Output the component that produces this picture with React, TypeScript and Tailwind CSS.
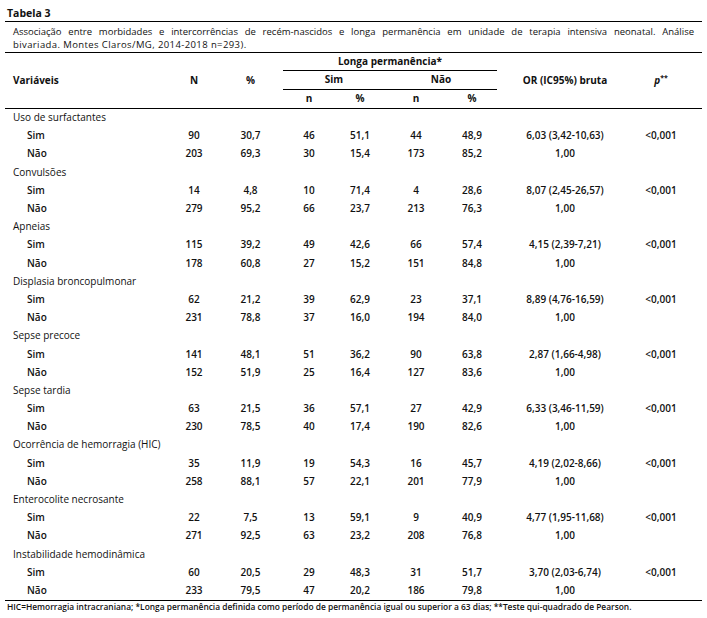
import React from "react";

type Row = [string, string, string, string, string, string, string, string];
type Group = { label: string; sim: Row; nao: Row };

const groups: Group[] = [
  { label: "Uso de surfactantes", sim: ["90", "30,7", "46", "51,1", "44", "48,9", "6,03 (3,42-10,63)", "<0,001"], nao: ["203", "69,3", "30", "15,4", "173", "85,2", "1,00", ""] },
  { label: "Convulsões", sim: ["14", "4,8", "10", "71,4", "4", "28,6", "8,07 (2,45-26,57)", "<0,001"], nao: ["279", "95,2", "66", "23,7", "213", "76,3", "1,00", ""] },
  { label: "Apneias", sim: ["115", "39,2", "49", "42,6", "66", "57,4", "4,15 (2,39-7,21)", "<0,001"], nao: ["178", "60,8", "27", "15,2", "151", "84,8", "1,00", ""] },
  { label: "Displasia broncopulmonar", sim: ["62", "21,2", "39", "62,9", "23", "37,1", "8,89 (4,76-16,59)", "<0,001"], nao: ["231", "78,8", "37", "16,0", "194", "84,0", "1,00", ""] },
  { label: "Sepse precoce", sim: ["141", "48,1", "51", "36,2", "90", "63,8", "2,87 (1,66-4,98)", "<0,001"], nao: ["152", "51,9", "25", "16,4", "127", "83,6", "1,00", ""] },
  { label: "Sepse tardia", sim: ["63", "21,5", "36", "57,1", "27", "42,9", "6,33 (3,46-11,59)", "<0,001"], nao: ["230", "78,5", "40", "17,4", "190", "82,6", "1,00", ""] },
  { label: "Ocorrência de hemorragia (HIC)", sim: ["35", "11,9", "19", "54,3", "16", "45,7", "4,19 (2,02-8,66)", "<0,001"], nao: ["258", "88,1", "57", "22,1", "201", "77,9", "1,00", ""] },
  { label: "Enterocolite necrosante", sim: ["22", "7,5", "13", "59,1", "9", "40,9", "4,77 (1,95-11,68)", "<0,001"], nao: ["271", "92,5", "63", "23,2", "208", "76,8", "1,00", ""] },
  { label: "Instabilidade hemodinâmica", sim: ["60", "20,5", "29", "48,3", "31", "51,7", "3,70 (2,03-6,74)", "<0,001"], nao: ["233", "79,5", "47", "20,2", "186", "79,8", "1,00", ""] },
];

const COLS = "grid grid-cols-[165px_48px_65px_52px_50px_62px_50px_136px_56px_13px]";

function DataRow({ name, vals }: { name: string; vals: Row }) {
  return (
    <div className={`${COLS} h-[18.2px] items-center font-semibold`}>
      <div className="pl-[22px]">{name}</div>
      {vals.map((v, i) => (
        <div key={i} className="text-center whitespace-nowrap">
          {v}
        </div>
      ))}
      <div />
    </div>
  );
}

export default function App() {
  return (
    <div className="w-[707px] h-[618px] bg-white px-[5px] font-['Open_Sans',sans-serif] text-[#111] overflow-hidden">
      <div className="h-[20.5px] flex items-end">
        <span className="pl-[2px] text-[10.5px] font-bold leading-[15px]">Tabela 3</span>
      </div>
      <div className="border-t-[1.5px] border-black px-[8px] pt-[3.5px] pb-[0.5px] text-[9.5px] leading-[13px] font-medium">
        <div className="text-justify [text-align-last:justify]">
          Associação entre morbidades e intercorrências de recém-nascidos e longa permanência em unidade de terapia intensiva neonatal. Análise
        </div>
        <div className="tracking-[0.4px]">bivariada. Montes Claros/MG, 2014-2018 n=293).</div>
      </div>
      <div className="border-t-[1.5px] border-black text-[10px]">
        <div className={`${COLS} grid-rows-[18px_19px_18px] font-bold`}>
          <div className="row-span-3 flex items-center pl-[8px]">Variáveis</div>
          <div className="row-span-3 flex items-center justify-center">N</div>
          <div className="row-span-3 flex items-center justify-center">%</div>
          <div className="col-span-4 flex items-center justify-center border-b-[1.5px] border-black">
            Longa permanência*
          </div>
          <div className="row-span-3 flex items-center justify-center">OR (IC95%) bruta</div>
          <div className="row-span-3 flex items-center justify-center">
            <span className="italic">p</span>
            <sup className="text-[7px] -top-[0.35em]">**</sup>
          </div>
          <div className="row-span-3" />
          <div className="col-span-2 flex items-center justify-center border-b-[1.5px] border-black">Sim</div>
          <div className="col-span-2 flex items-center justify-center border-b-[1.5px] border-black">Não</div>
          <div className="flex items-center justify-center">n</div>
          <div className="flex items-center justify-center">%</div>
          <div className="flex items-center justify-center">n</div>
          <div className="flex items-center justify-center">%</div>
        </div>
        <div className="border-t-[1.5px] border-black">
          {groups.map((g) => (
            <div key={g.label}>
              <div className="h-[18.2px] flex items-center pl-[8px] font-medium">{g.label}</div>
              <DataRow name="Sim" vals={g.sim} />
              <DataRow name="Não" vals={g.nao} />
            </div>
          ))}
        </div>
        <div className="border-t-[1.5px] border-black pl-[2px] text-[8.4px] leading-[11px] font-semibold whitespace-nowrap">
          HIC=Hemorragia intracraniana; *Longa permanência definida como período de permanência igual ou superior a 63 dias; **Teste qui-quadrado de Pearson.
        </div>
      </div>
    </div>
  );
}
